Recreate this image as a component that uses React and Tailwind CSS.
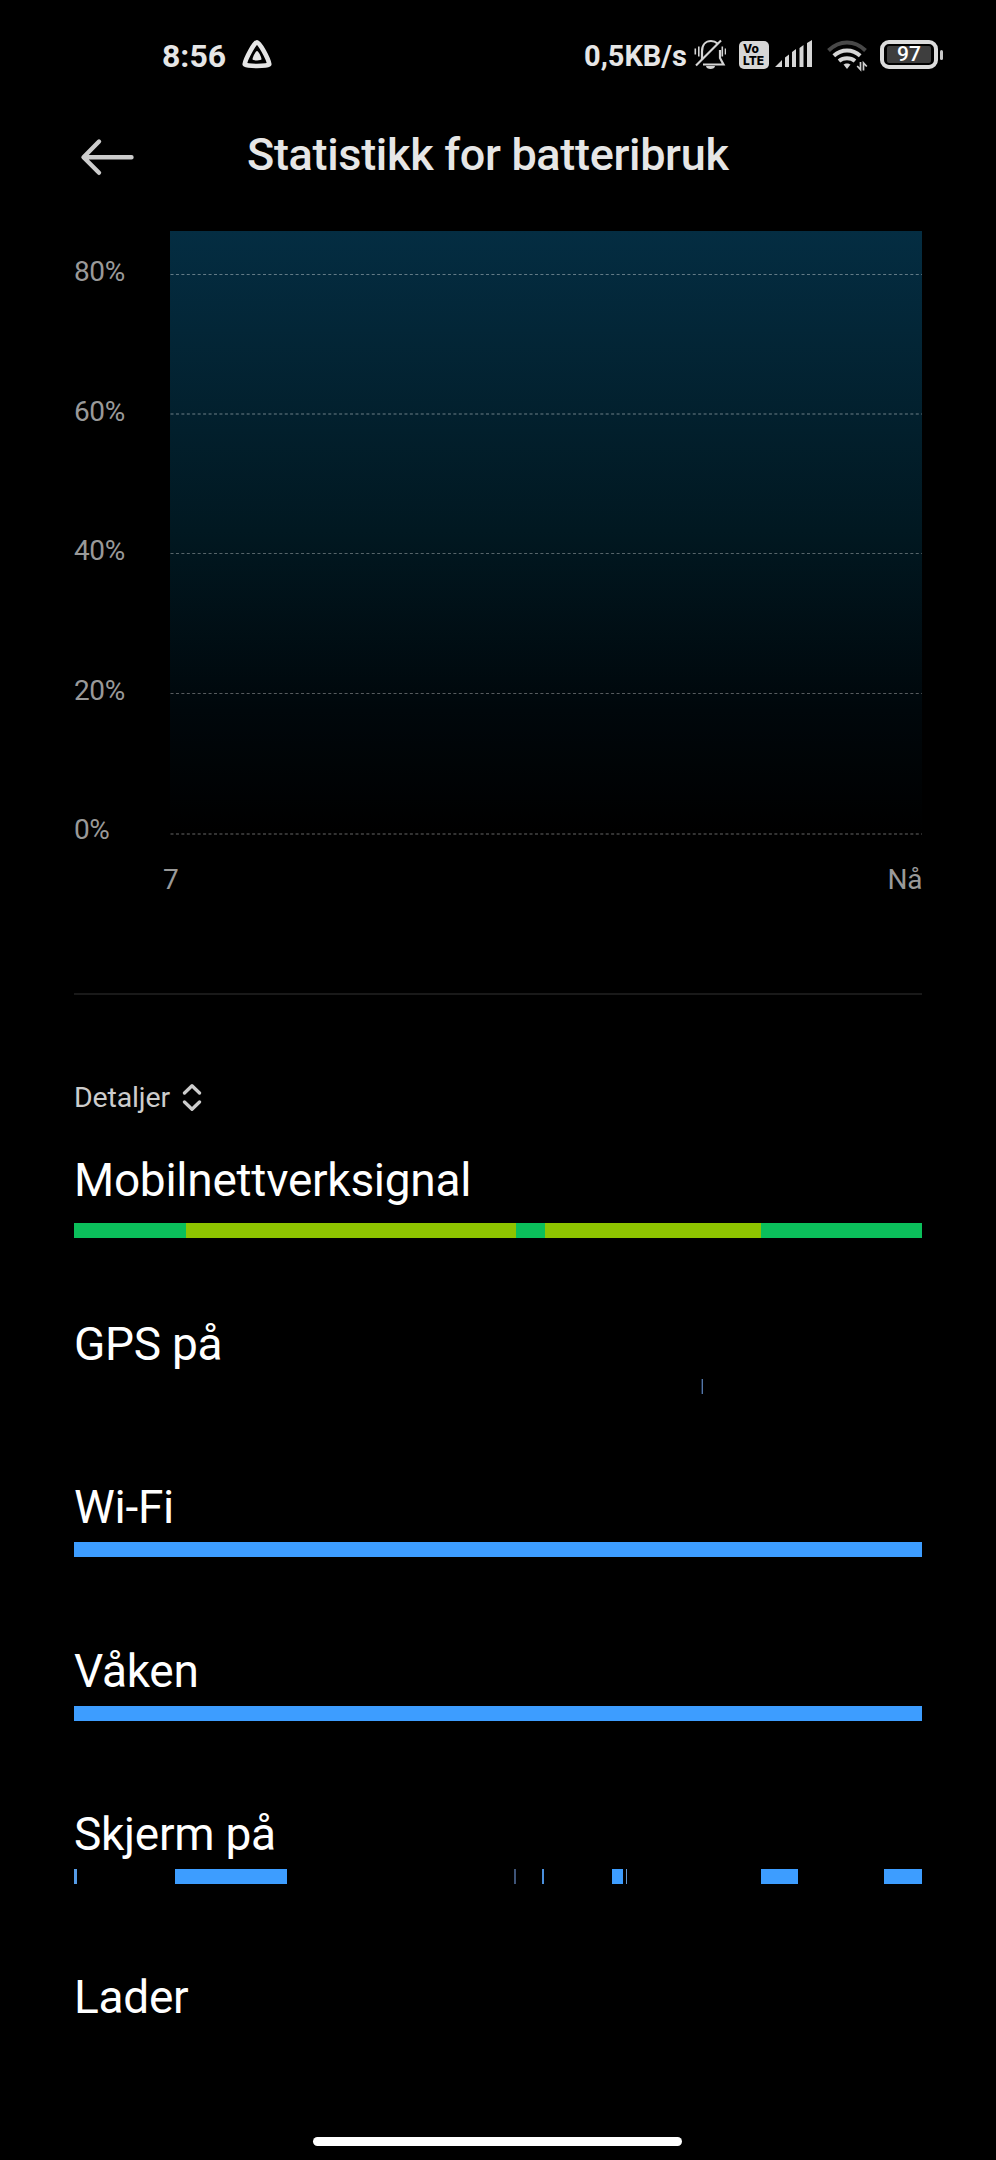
const GRID_LINES = [
  { y: 43, h: 1, o: 0.38 },
  { y: 182, h: 2, o: 0.21 },
  { y: 322, h: 1, o: 0.34 },
  { y: 462, h: 1, o: 0.34 },
  { y: 602, h: 2, o: 0.2 },
];

const BLUE = '#3d9dff';
const GREEN = '#0bbf5b';
const LIME = '#8ec400';

const ROWS = [
  {
    name: 'Mobilnettverksignal',
    height: 'h-[164px]',
    bars: [
      { x: 0, w: 112, c: GREEN },
      { x: 112, w: 330, c: LIME },
      { x: 442, w: 29, c: GREEN },
      { x: 471, w: 216, c: LIME },
      { x: 687, w: 161, c: GREEN },
    ],
  },
  {
    name: 'GPS på',
    height: 'h-[163px]',
    bars: [
      { x: 627, w: 1, c: '#1b2c48' },
      { x: 628, w: 1, c: '#5577a6' },
    ],
  },
  { name: 'Wi-Fi', height: 'h-[164px]', bars: [{ x: 0, w: 848, c: BLUE }] },
  { name: 'Våken', height: 'h-[163px]', bars: [{ x: 0, w: 848, c: BLUE }] },
  {
    name: 'Skjerm på',
    height: 'h-[163px]',
    bars: [
      { x: 0, w: 3, c: '#559be6' },
      { x: 101, w: 112, c: BLUE },
      { x: 440, w: 2, c: '#3e5478' },
      { x: 468, w: 2, c: '#4a8fdc' },
      { x: 538, w: 11, c: BLUE },
      { x: 552, w: 1, c: '#6495cd' },
      { x: 687, w: 37, c: BLUE },
      { x: 810, w: 38, c: BLUE },
    ],
  },
  { name: 'Lader', height: 'h-[163px]', bars: [] },
];

function StatusBar() {
  return (
    <div className="flex h-[110px] shrink-0 items-start text-[#e6e6e6]">
      <span className="ml-[162px] mt-[36px] w-[64px] whitespace-nowrap text-[32px] font-bold leading-[40px]">8:56</span>
      <svg className="ml-[15px] mt-[38px]" width="32" height="34" viewBox="0 0 32 34">
        <path d="M16 4.2C13.5 4.2 4.5 20.5 3.7 26.2C3.5 28.6 28.5 28.6 28.3 26.2C27.5 20.5 18.5 4.2 16 4.2Z" fill="none" stroke="#e6e6e6" strokeWidth="4.6" strokeLinejoin="round" />
        <path d="M16 13C14.6 13 11.5 19.2 11.5 21.3C11.5 22.8 20.5 22.8 20.5 21.3C20.5 19.2 17.4 13 16 13Z" fill="#e6e6e6" />
      </svg>
      <span className="ml-[311px] mt-[36px] w-[104px] whitespace-nowrap text-[29px] font-bold leading-[40px]">0,5KB/s</span>
      <svg className="ml-[6px] mt-[38px]" width="32" height="32" viewBox="693.5 38 32 32" fill="none" stroke="#d4d4d4" strokeWidth="2.2">
        <path d="M701.5 60V51.5C701.5 44.5 705.5 41 710.5 41C713 41 715.3 41.900 716.900 43.500M719.500 50V58L723 64.500H702.500" />
        <path d="M695.500 65.500L720.500 40.500" />
        <path d="M694.800 48.500V54.500M698.300 46.500V56.500M721.800 46.500V56.500M725 48.500V54.500" strokeWidth="1.600" />
        <path d="M705.500 66H714.500C714.500 70 705.500 70 705.500 66Z" fill="#d4d4d4" stroke="none" />
      </svg>
      <div className="ml-[13px] mt-[41px] flex h-[28px] w-[30px] shrink-0 flex-col rounded-[5px] bg-[#d6d6d6] font-[Inter,sans-serif] text-[12px] font-extrabold leading-[12px] text-black">
        <span className="ml-[4px] mt-[2px] h-[12px]">Vo</span>
        <span className="ml-[4px] h-[12px] whitespace-nowrap">LTE</span>
      </div>
      <svg className="ml-[6px] mt-[40px]" width="38" height="28" viewBox="0 0 38 28" fill="#d6d6d6">
        <path d="M0 27L7 20V27ZM10 17.500L14 14.500V27H10ZM17 12L21 9V27H17ZM24.500 8L28.500 5V27H24.500ZM32 3L37 0V27H32Z" />
      </svg>
      <svg className="ml-[13px] mt-[40px]" width="42" height="32" viewBox="0 0 42 32" fill="none">
        <path d="M2.500 10.500C13.500 -.2 28.500 -.2 39.500 10.500" stroke="#484848" strokeWidth="4" />
        <path d="M7.800 15.700C15.500 8.600 26.500 8.600 34.200 15.700" stroke="#d6d6d6" strokeWidth="4" />
        <path d="M13 21C17.500 17.300 24.500 17.300 29 21" stroke="#d6d6d6" strokeWidth="4" />
        <path d="M17.500 24.500C19.200 23 22.800 23 24.500 24.500L21 29Z" fill="#d6d6d6" />
        <path d="M34.500 22V29.500L31.200 26M37.500 30.500V23L40.800 26.500" stroke="#d0d0d0" strokeWidth="1.700" />
      </svg>
      <div className="ml-[12px] mt-[40px] flex h-[29px] w-[58px] shrink-0 items-center justify-center rounded-[9px] border-4 border-[#dcdcdc]">
        <div className="flex h-[17px] w-[44px] items-center justify-center rounded-[2px] bg-[#3e3e3e] text-[21px] font-medium leading-[17px] text-white">97</div>
      </div>
      <div className="ml-[2px] mt-[50px] h-[10px] w-[3px] rounded-[2px] bg-[#c8c8c8]" />
    </div>
  );
}

function Header() {
  return (
    <header className="flex h-[121px] shrink-0">
      <svg className="ml-[80px] mt-[28px]" width="56" height="38" viewBox="80 138 56 38" fill="none" stroke="#cccccc" strokeWidth="4.400" strokeLinecap="round" strokeLinejoin="round">
        <path d="M131.500 157.300H84M99 141.500L83.500 157.300L99 172.800" />
      </svg>
      <h1 className="ml-[111px] mt-[18px] whitespace-nowrap text-[45px] font-medium leading-[54px] tracking-[-0.320px] text-[#e6e6e6]">Statistikk for batteribruk</h1>
    </header>
  );
}

function Chart() {
  return (
    <section className="flex h-[762px] shrink-0 flex-col px-[74px]">
      <div className="flex h-[629px]">
        <div className="flex w-[96px] flex-col pt-[21px] text-[28px] leading-[40px] tracking-[-0.400px] text-[#999999]">
          {['80%', '60%', '40%', '20%', '0%'].map((label) => (
            <div key={label} className="h-[139.500px] shrink-0">{label}</div>
          ))}
        </div>
        <svg width="752" height="605" viewBox="0 0 752 605" shapeRendering="crispEdges">
          <defs>
            <linearGradient id="level" x1="0" y1="0" x2="0" y2="1">
              <stop offset="0" stopColor="#042d42" />
              <stop offset="0.500" stopColor="#011821" />
              <stop offset="0.800" stopColor="#00070b" />
              <stop offset="1" stopColor="#000000" />
            </linearGradient>
          </defs>
          <rect width="752" height="600" fill="url(#level)" />
          {GRID_LINES.map((g) => (
            <line key={g.y} x1="0.500" x2="752" y1={g.y + g.h / 2} y2={g.y + g.h / 2} stroke="#ffffff" strokeOpacity={g.o} strokeWidth={g.h} strokeDasharray="3 2.440" shapeRendering="auto" />
          ))}
        </svg>
      </div>
      <div className="flex justify-between pl-[89px] text-[28px] leading-[40px] tracking-[-0.400px] text-[#999999]">
        <span>7</span>
        <span>Nå</span>
      </div>
    </section>
  );
}

function Details() {
  return (
    <section className="flex flex-col px-[74px]">
      <div className="h-[2px] w-full bg-[#191919]" />
      <button className="mt-[83px] flex h-[40px] items-center text-[28.500px] leading-[40px] tracking-[-0.150px] text-[#cccccc]">
        Detaljer
        <svg className="ml-[12px]" width="20" height="28" viewBox="0 0 20 28" fill="none" stroke="#cccccc" strokeWidth="3.300" strokeLinecap="round" strokeLinejoin="round">
          <path d="M2.500 9L10 1.800L17.500 9M2.500 18L10 25.200L17.500 18" />
        </svg>
      </button>
      <div className="mt-[35px] flex flex-col">
        {ROWS.map((row, i) => (
          <div key={row.name} className={row.height}>
            <h2 className="whitespace-nowrap text-[46px] leading-[54px] tracking-[-0.260px] text-white">{row.name}</h2>
            <svg className={i === 0 ? 'mt-[16px] block' : 'mt-[8px] block'} width="848" height="15" viewBox="0 0 848 15" shapeRendering="crispEdges">
              {row.bars.map((b) => (
                <rect key={b.x} x={b.x} width={b.w} height="15" fill={b.c} />
              ))}
            </svg>
          </div>
        ))}
      </div>
    </section>
  );
}

export default function App() {
  return (
    <div className="flex h-[2160px] w-[996px] flex-col overflow-hidden bg-black font-[Roboto,sans-serif]">
      <StatusBar />
      <Header />
      <Chart />
      <Details />
      <div className="ml-[313px] mt-[4px] h-[9px] w-[369px] shrink-0 rounded-full bg-white" />
    </div>
  );
}
